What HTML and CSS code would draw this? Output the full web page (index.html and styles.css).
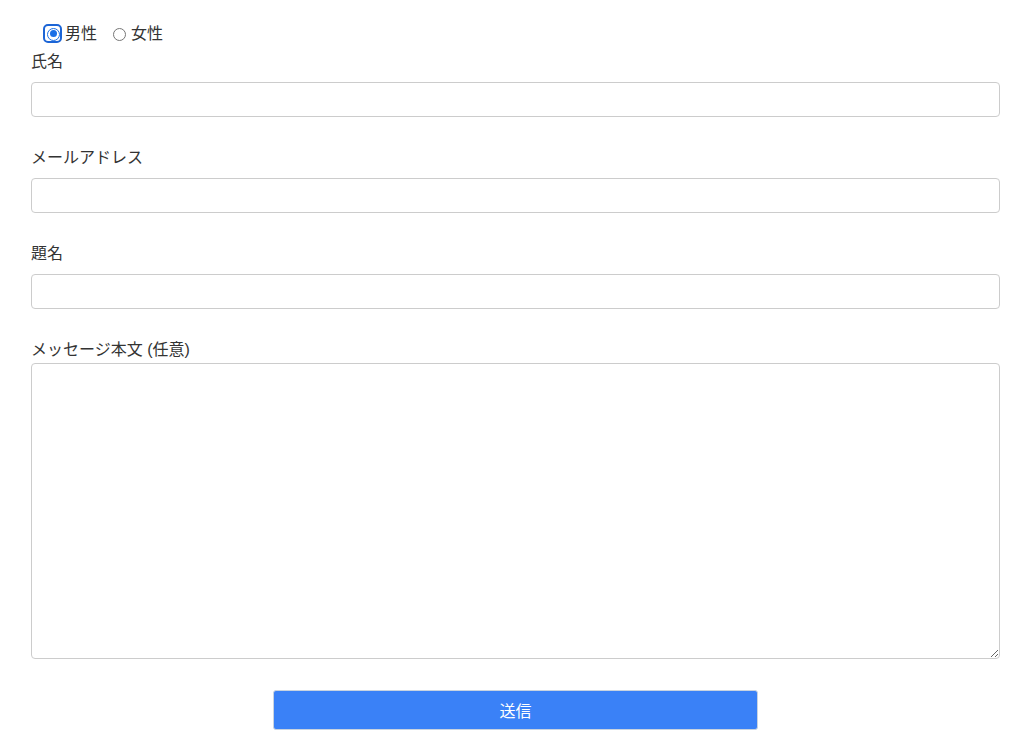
FILE: index.html
```html
<!DOCTYPE html>
<html lang="ja">
<head>
<meta charset="utf-8">
<title>お問い合わせ</title>
<link rel="stylesheet" href="styles.css">
</head>
<body>
<form class="form">
  <div class="radios">
    <label class="radio-item"><span class="radio checked focus"></span>男性</label>
    <label class="radio-item"><span class="radio"></span>女性</label>
  </div>
  <label class="label first">氏名</label>
  <input class="field" type="text">
  <label class="label">メールアドレス</label>
  <input class="field" type="text">
  <label class="label">題名</label>
  <input class="field" type="text">
  <label class="label">メッセージ本文 (任意)</label>
  <textarea class="area"></textarea>
  <div class="actions">
    <button class="submit" type="button">送信</button>
  </div>
</form>
</body>
</html>
```
FILE: styles.css
```css
html, body {
  margin: 0;
  background: #ffffff;
}
body {
  font-family: "Liberation Sans", "Noto Sans CJK JP", sans-serif;
  font-size: 16px;
  color: #333333;
}
.form {
  display: flex;
  flex-direction: column;
  padding: 22px 24px 0 31px;
}
.radios {
  display: flex;
  align-items: center;
  height: 24px;
  padding-left: 16px;
  gap: 4px;
}
.radio-item {
  display: flex;
  align-items: center;
  line-height: 24px;
  margin-right: 12px;
}
.radio {
  box-sizing: border-box;
  width: 13px;
  height: 13px;
  border-radius: 50%;
  border: 1px solid #767676;
  background: #fff;
  margin-right: 5px;
  position: relative;
}
.radio.checked {
  border: 1.5px solid #1a6fe6;
}
.radio.checked::after {
  content: "";
  position: absolute;
  left: 1.5px;
  top: 1.5px;
  width: 7px;
  height: 7px;
  border-radius: 50%;
  background: #1a6fe6;
}
.radio.focus::before {
  content: "";
  position: absolute;
  left: -5px;
  top: -5px;
  width: 19px;
  height: 19px;
  box-sizing: border-box;
  border: 2.5px solid #1c65d6;
  border-radius: 5px;
}
.label {
  display: block;
  line-height: 24px;
  margin-top: 29px;
  margin-bottom: 8px;
}
.label.first {
  margin-top: 4px;
}
.field {
  box-sizing: border-box;
  height: 35px;
  width: 100%;
  border: 1px solid #cccccc;
  border-radius: 4px;
  background: #fff;
  margin: 0;
  font: inherit;
  padding: 0 10px;
}
.area {
  box-sizing: border-box;
  height: 296px;
  width: 100%;
  border: 1px solid #cccccc;
  border-radius: 4px;
  background: #fff;
  margin: 0;
  font: inherit;
  resize: vertical;
}
.label + .area {
  margin-top: -7px;
}
.actions {
  display: flex;
  justify-content: center;
  margin-top: 31px;
}
.submit {
  width: 50%;
  height: 40px;
  background: #3a81f7;
  color: #ffffff;
  border: 1px solid #c9d3e0;
  border-radius: 3px;
  font-family: "Liberation Sans", "Noto Sans CJK JP", sans-serif;
  font-size: 16px;
}
```
